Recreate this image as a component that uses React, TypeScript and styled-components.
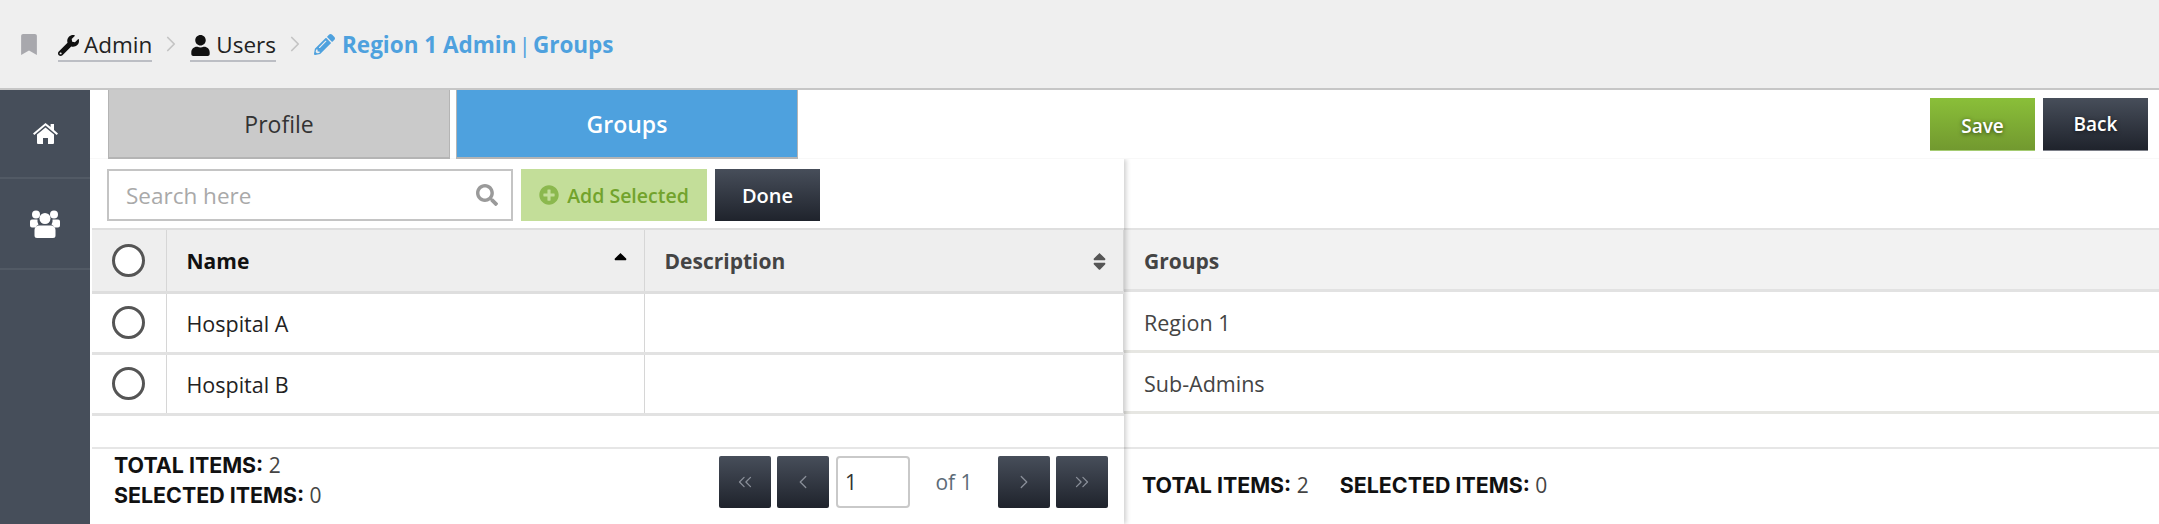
import { createGlobalStyle, styled } from "styled-components";
import { FaBookmark, FaPencilAlt, FaPlusCircle, FaSearch, FaSort, FaSortUp, FaUser, FaWrench } from "react-icons/fa";
import { ChevronLeft, ChevronRight, ChevronsLeft, ChevronsRight } from "lucide-react";

const GlobalStyle = createGlobalStyle`
    html, body {
        margin: 0;
        padding: 0;
        background: #fff;
        overflow: hidden;
    }
    body {
        font-family: "Open Sans", "Noto Sans", sans-serif;
        color: #333;
    }
    * { box-sizing: border-box; }
`

const darkGradient = "linear-gradient(to bottom, #474e5a, #1f232c)";

const Page = styled.div`
    width: 2159px;
    height: 524px;
    display: flex;
    flex-direction: column;
    overflow: hidden;
`

const Header = styled.header`
    height: 90px;
    flex: none;
    background: #efefef;
    border-bottom: 2px solid #c6c6c6;
    display: flex;
    align-items: center;
    padding: 0 0 0 20px;
    font-size: 22.5px;
`

const BookmarkIcon = styled(FaBookmark)`
    color: #a8a8ad;
    font-size: 21px;
    width: 18px;
    margin-right: 20px;
`

const Crumb = styled.a`
    display: flex;
    align-items: center;
    gap: 5px;
    color: #222;
    line-height: 30px;
    margin-top: 4px;
    border-bottom: 2px solid #bcbec4;
    svg { font-size: 21px; color: #111; }
`

const CrumbArrow = styled(ChevronRight)`
    color: #c4c4c4;
    margin: 0 6px;
`

const CurrentCrumb = styled.span`
    display: flex;
    align-items: center;
    gap: 7px;
    color: #4ea1de;
    font-size: 22.5px;
    font-weight: 700;
    svg { font-size: 21px; }
`

const Divider = styled.span`
    margin: 0 2px;
    font-weight: 400;
`

const Body = styled.div`
    flex: 1;
    display: flex;
    min-height: 0;
`

const Sidebar = styled.nav`
    width: 90px;
    flex: none;
    background: #464e5a;
`

const SideItem = styled.div<{ $height: number }>`
    height: ${props => props.$height}px;
    display: flex;
    align-items: center;
    justify-content: center;
    border-bottom: 2px solid #525a65;
`

const Main = styled.main`
    flex: 1;
    display: flex;
    flex-direction: column;
    min-width: 0;
`

const TopRow = styled.div`
    height: 69px;
    flex: none;
    display: flex;
    justify-content: space-between;
    padding: 0 11px 0 18px;
    border-bottom: 1px solid #f8f8f8;
`

const Tabs = styled.div`
    display: flex;
    gap: 6px;
    height: 69px;
`

const Tab = styled.div<{ $active?: boolean }>`
    width: 342px;
    display: flex;
    align-items: center;
    justify-content: center;
    font-size: 23px;
    font-weight: ${props => props.$active ? 600 : 400};
    color: ${props => props.$active ? "#fff" : "#333"};
    background: ${props => props.$active ? "#4ea1de" : "#cacaca"};
    border: 1px solid #b4b4b4;
    border-top: none;
    border-bottom-width: 2px;
`

const Actions = styled.div`
    display: flex;
    gap: 8px;
    padding-top: 8px;
`

const ActionButton = styled.button<{ $green?: boolean }>`
    width: 105px;
    height: 53px;
    border: none;
    border-bottom: 1px solid ${props => props.$green ? "#a5cc72" : "#7d8089"};
    background: ${props => props.$green ? "linear-gradient(to bottom, #8abf39, #72992f)" : darkGradient};
    color: #fff;
    font-family: inherit;
    font-size: 19px;
    font-weight: 600;
    text-shadow: 0 1px 4px rgba(0, 0, 0, .6);
    padding: ${props => props.$green ? "4px 0 0" : "0"};
`

const Panes = styled.div`
    flex: 1;
    display: flex;
    min-height: 0;
`

const LeftPane = styled.section`
    width: 1034px;
    flex: none;
    display: flex;
    flex-direction: column;
    padding-left: 2px;
    background: #fff;
    box-shadow: 2px 0 5px rgba(0, 0, 0, .2);
    clip-path: inset(0 -12px 0 0);
    position: relative;
    z-index: 1;
`

const RightPane = styled.section`
    flex: 1;
    display: flex;
    flex-direction: column;
    padding-top: 69px;
`

const Toolbar = styled.div`
    height: 69px;
    flex: none;
    display: flex;
    gap: 8px;
    padding: 10px 0 0 15px;
`

const SearchBox = styled.div`
    width: 406px;
    height: 52px;
    border: 2px solid #c4c4c4;
    display: flex;
    align-items: center;
    justify-content: space-between;
    padding: 0 13px 0 17px;
    font-size: 22.5px;
    color: #a9a9a9;
    svg { font-size: 22px; color: #9a9a9a; }
`

const AddButton = styled.button`
    width: 186px;
    height: 52px;
    border: none;
    background: #c3de99;
    color: #72a32c;
    font-family: inherit;
    font-size: 19.5px;
    font-weight: 600;
    display: flex;
    align-items: center;
    justify-content: center;
    gap: 8px;
    svg { font-size: 20px; color: #8bb84e; }
`

const DoneButton = styled.button`
    width: 105px;
    height: 52px;
    border: none;
    background: ${darkGradient};
    color: #fff;
    font-family: inherit;
    font-size: 20px;
    font-weight: 600;
`

const Grid = styled.table`
    width: 100%;
    border-collapse: collapse;
    table-layout: fixed;
    flex: none;
    border-right: 1px solid #d6d6d6;
`

const HeadCell = styled.th<{ $width?: number; $muted?: boolean }>`
    width: ${props => props.$width ? `${props.$width}px` : "auto"};
    height: 63px;
    padding: 2px 20px 0;
    text-align: left;
    font-size: 21px;
    font-weight: 700;
    color: ${props => props.$muted ? "#444" : "#111"};
    background: #eeeeee;
    border-top: 2px solid #dedede;
    border-bottom: 3px solid #dedede;
    border-left: 1px solid #d6d6d6;
    &:first-child { border-left: none; padding: 0; }
`

const HeadInner = styled.div`
    display: flex;
    align-items: center;
    justify-content: space-between;
`

const SortMark = styled.span<{ $muted?: boolean }>`
    display: flex;
    font-size: 21px;
    margin-right: -7px;
    color: ${props => props.$muted ? "#555" : "#000"};
`

const Cell = styled.td`
    height: 61px;
    padding: 2px 20px 0;
    font-size: 21.5px;
    color: #222;
    border-bottom: 3px solid #e2e2e2;
    border-left: 1px solid #d6d6d6;
    &:first-child { border-left: none; padding: 0; }
`

const Radio = styled.span`
    display: block;
    width: 33px;
    height: 33px;
    margin: 0 auto;
    border: 3px solid #555;
    border-radius: 50%;
    background: #fff;
`

const RightHead = styled.div`
    height: 64px;
    flex: none;
    display: flex;
    align-items: center;
    padding: 2px 0 0 20px;
    font-size: 21px;
    font-weight: 700;
    color: #444;
    background: #f2f2f2;
    border-top: 2px solid #e2e2e2;
    border-bottom: 3px solid #e2e2e2;
`

const RightRow = styled.div`
    height: 61px;
    flex: none;
    display: flex;
    align-items: center;
    padding: 2px 0 0 20px;
    font-size: 21.5px;
    color: #444;
    border-bottom: 3px solid #e6e6e2;
`

const Spacer = styled.div`
    flex: 1;
`

const Footer = styled.div<{ $right?: boolean }>`
    height: 77px;
    flex: none;
    border-top: 2px solid #e6e6e6;
    display: flex;
    align-items: ${props => props.$right ? "center" : "flex-start"};
    justify-content: ${props => props.$right ? "flex-start" : "space-between"};
    gap: ${props => props.$right ? "31px" : "0"};
    padding: ${props => props.$right ? "0 0 4px 18px" : "4px 16px 0 22px"};
`

const Counts = styled.div`
    display: flex;
    flex-direction: column;
    gap: 6px;
`

const Count = styled.div`
    font-size: 21px;
    line-height: 24px;
    color: #444;
    b {
        font-family: "Inter", sans-serif;
        font-size: 21.4px;
        font-weight: 700;
        color: #111;
    }
`

const Pager = styled.div`
    display: flex;
    align-items: center;
    gap: 6px;
    padding-top: 3px;
`

const PageButton = styled.button`
    width: 52px;
    height: 52px;
    padding: 0;
    border: none;
    border-radius: 2px;
    background: ${darkGradient};
    color: #8a8f99;
    display: flex;
    align-items: center;
    justify-content: center;
`

const PageInput = styled.div`
    width: 74px;
    height: 52px;
    margin-left: 1px;
    border: 2px solid #c9c9c9;
    border-radius: 4px;
    display: flex;
    align-items: center;
    padding-left: 7px;
    font-size: 21px;
    color: #333;
`

const PageOf = styled.span`
    width: 76px;
    text-align: center;
    font-size: 21px;
    color: #5c6b78;
`

const HomeIcon = () => (
    <svg width="25" height="21" viewBox="0 0 25 21" fill="#fff">
        <path d="M12.5 4.5 4 11.6V20a1 1 0 0 0 1 1h5v-6h5v6h5a1 1 0 0 0 1-1v-8.4z" />
        <path d="M12.5 0 0 10.4l1.3 1.5L12.5 2.6l11.2 9.3 1.3-1.5-4-3.4V1h-3.4v3z" />
    </svg>
);

const GroupIcon = () => (
    <svg width="30" height="28" viewBox="0 0 30 28" fill="#fff">
        <circle cx="6" cy="4.5" r="4" />
        <circle cx="24" cy="4.5" r="4" />
        <circle cx="15" cy="8.5" r="5.5" />
        <path d="M2 9.5h5.5a7 7 0 0 0 1 5 7 7 0 0 0-3 3H2a2 2 0 0 1-2-2v-4a2 2 0 0 1 2-2zM22.5 9.5H28a2 2 0 0 1 2 2v4a2 2 0 0 1-2 2h-3.500a7 7 0 0 0-3-3 7 7 0 0 0 1-5z" />
        <path d="M9 15.500h12a4.500 4.500 0 0 1 4.500 4.500v5.500a2.500 2.500 0 0 1-2.500 2.500H7a2.500 2.500 0 0 1-2.500-2.500V20A4.500 4.500 0 0 1 9 15.500z" />
    </svg>
);

const rows = [
    { name: "Hospital A", group: "Region 1" },
    { name: "Hospital B", group: "Sub-Admins" },
];

const App = () => {
    return (
        <Page>
            <GlobalStyle />
            <Header>
                <BookmarkIcon />
                <Crumb><FaWrench />Admin</Crumb>
                <CrumbArrow size={26} strokeWidth={1.6} />
                <Crumb><FaUser />Users</Crumb>
                <CrumbArrow size={26} strokeWidth={1.6} />
                <CurrentCrumb>
                    <FaPencilAlt />
                    <span>Region 1 Admin<Divider>|</Divider>Groups</span>
                </CurrentCrumb>
            </Header>
            <Body>
                <Sidebar>
                    <SideItem $height={89}><HomeIcon /></SideItem>
                    <SideItem $height={91}><GroupIcon /></SideItem>
                </Sidebar>
                <Main>
                    <TopRow>
                        <Tabs>
                            <Tab>Profile</Tab>
                            <Tab $active>Groups</Tab>
                        </Tabs>
                        <Actions>
                            <ActionButton $green>Save</ActionButton>
                            <ActionButton>Back</ActionButton>
                        </Actions>
                    </TopRow>
                    <Panes>
                        <LeftPane>
                            <Toolbar>
                                <SearchBox>Search here<FaSearch /></SearchBox>
                                <AddButton><FaPlusCircle />Add Selected</AddButton>
                                <DoneButton>Done</DoneButton>
                            </Toolbar>
                            <Grid>
                                <thead>
                                    <tr>
                                        <HeadCell $width={74}><Radio /></HeadCell>
                                        <HeadCell $width={478}>
                                            <HeadInner>Name<SortMark><FaSortUp /></SortMark></HeadInner>
                                        </HeadCell>
                                        <HeadCell $muted>
                                            <HeadInner>Description<SortMark $muted><FaSort /></SortMark></HeadInner>
                                        </HeadCell>
                                    </tr>
                                </thead>
                                <tbody>
                                    {rows.map(row => (
                                        <tr key={row.name}>
                                            <Cell><Radio /></Cell>
                                            <Cell>{row.name}</Cell>
                                            <Cell />
                                        </tr>
                                    ))}
                                </tbody>
                            </Grid>
                            <Spacer />
                            <Footer>
                                <Counts>
                                    <Count><b>TOTAL ITEMS:</b> 2</Count>
                                    <Count><b>SELECTED ITEMS:</b> 0</Count>
                                </Counts>
                                <Pager>
                                    <PageButton><ChevronsLeft size={22} strokeWidth={1.4} /></PageButton>
                                    <PageButton><ChevronLeft size={22} strokeWidth={1.4} /></PageButton>
                                    <PageInput>1</PageInput>
                                    <PageOf>of 1</PageOf>
                                    <PageButton><ChevronRight size={22} strokeWidth={1.4} /></PageButton>
                                    <PageButton><ChevronsRight size={22} strokeWidth={1.4} /></PageButton>
                                </Pager>
                            </Footer>
                        </LeftPane>
                        <RightPane>
                            <RightHead>Groups</RightHead>
                            {rows.map(row => <RightRow key={row.group}>{row.group}</RightRow>)}
                            <Spacer />
                            <Footer $right>
                                <Count><b>TOTAL ITEMS:</b> 2</Count>
                                <Count><b>SELECTED ITEMS:</b> 0</Count>
                            </Footer>
                        </RightPane>
                    </Panes>
                </Main>
            </Body>
        </Page>
    );
}

export default App;
